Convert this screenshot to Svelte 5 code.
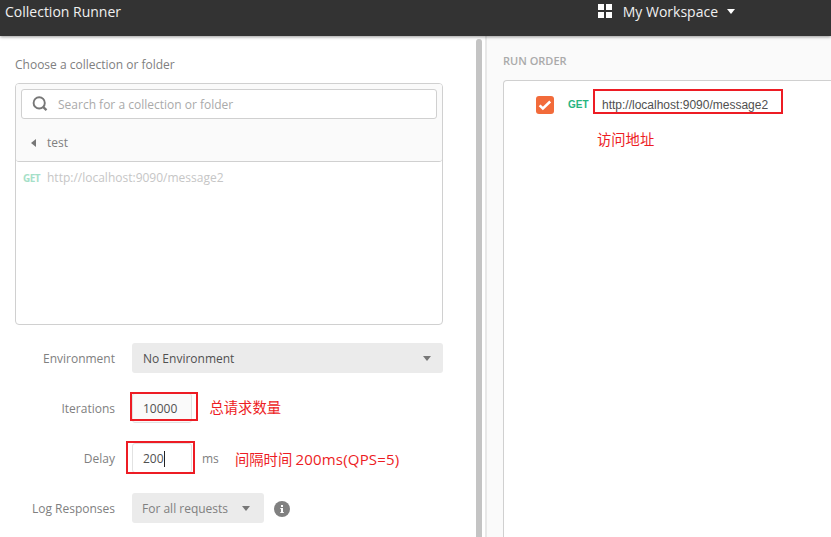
<script>
  let search = $state('');
  let iterations = $state('10000');
  let delay = $state('200');
</script>

<div class="app">
  <header>
    <h1>Collection Runner</h1>
    <div class="workspace">
      <svg width="14" height="14" viewBox="0 0 14 14" fill="#fff"><path d="M0 0h6v6H0zM8 0h6v6H8zM0 8h6v6H0zM8 8h6v6H8z" /></svg>
      <span class="wsname">My Workspace</span>
      <svg width="8" height="5" viewBox="0 0 8 5" fill="#fff"><path d="M0 0h8L4 5z" /></svg>
    </div>
  </header>

  <main>
    <section class="left">
      <div class="config">
        <div class="choose"><span>Choose a collection or folder</span></div>
        <div class="picker">
          <div class="picker-head">
            <div class="search">
              <svg width="16" height="16" viewBox="0 0 16 16" fill="none" stroke="#777" stroke-width="1.9"><circle cx="7.2" cy="6.9" r="5.6" /><path d="M11 10.8l3.5 3.3" stroke-width="2.3" /></svg>
              <input bind:value={search} placeholder="Search for a collection or folder" />
            </div>
            <div class="crumb">
              <svg width="5" height="8" viewBox="0 0 5 8" fill="#777"><path d="M5 0v8L0 4z" /></svg>
              <span>test</span>
            </div>
          </div>
          <div class="item"><b>GET</b><span>http://localhost:9090/message2</span></div>
        </div>

        <div class="row">
          <label for="env">Environment</label>
          <button id="env" class="select wide"><span>No Environment</span>
            <svg width="8" height="5" viewBox="0 0 8 5" fill="#777"><path d="M0 0h8L4 5z" /></svg></button>
        </div>
        <div class="row">
          <label for="iter">Iterations</label>
          <input id="iter" class="num soft" bind:value={iterations} />
        </div>
        <div class="row">
          <label for="delay">Delay</label>
          <div class="num"><span>{delay}</span><i class="caret"></i></div>
          <span class="unit">ms</span>
        </div>
        <div class="row">
          <label for="log">Log Responses</label>
          <button id="log" class="select"><span>For all requests</span>
            <svg width="8" height="5" viewBox="0 0 8 5" fill="#777"><path d="M0 0h8L4 5z" /></svg></button>
          <svg class="info" width="16" height="16" viewBox="0 0 16 16"><circle cx="8" cy="8" r="8" fill="#808080" /><path d="M7 4h2v2H7zM6.3 7H9v4h.8v1H6.3v-1H7V8h-.7z" fill="#fff" /></svg>
        </div>
      </div>
      <div class="scroll"></div>
    </section>

    <section class="right">
      <h2><span>RUN ORDER</span></h2>
      <div class="order">
        <div class="request">
          <span class="check"><svg width="18" height="18" viewBox="0 0 18 18" fill="none" stroke="#fff" stroke-width="2.5"><path d="M3.6 9.3l3.3 3.2 7.3-7" /></svg></span>
          <b>GET</b>
          <span>http://localhost:9090/message2</span>
        </div>
      </div>
    </section>
  </main>

  <div class="mark m-url"></div>
  <div class="mark m-iter"></div>
  <div class="mark m-delay"></div>
  <span class="note n-url">访问地址</span>
  <span class="note n-iter">总请求数量</span>
  <span class="note n-delay">间隔时间 <span class="latin">200ms(QPS=5)</span></span>
</div>

<style>
  :global(body) { margin: 0; overflow: hidden; }
  * { box-sizing: border-box; }
  .app {
    position: relative; width: 831px; height: 537px; overflow: hidden;
    display: flex; flex-direction: column; background: #fff;
    font: 12px/18px "Open Sans", "Noto Sans CJK SC", sans-serif; color: #808080;
  }
  svg { display: block; flex: none; }
  span, b, label { white-space: nowrap; }
  input, button { font: inherit; color: inherit; border: 0; outline: 0; padding: 0; margin: 0; }
  header {
    height: 36px; flex: none; background: #333; color: #f0f0f0; z-index: 1;
    display: flex; justify-content: space-between; padding: 2px 96px 0 5px;
    box-shadow: 0 1px 3px rgba(0, 0, 0, .4);
  }
  h1 { margin: 0; font-size: 14px; line-height: 20px; font-weight: 400; }
  .workspace { display: flex; align-items: center; height: 18px; font-size: 14px; line-height: 20px; }
  .wsname { margin: 1px 9px 0 11px; }
  main { flex: 1; min-height: 0; display: flex; }
  .left { width: 487px; flex: none; display: flex; border-right: 2px solid #e8e8e8; }
  .config { width: 476px; padding: 20px 33px 0 15px; }
  .scroll { width: 6px; margin-top: 3px; border-radius: 3px 3px 0 0; background: #c4c4c4; }
  .choose { height: 27px; }
  .picker { height: 242px; border: 1px solid #d0d0d0; border-radius: 4px; background: #fff; margin-bottom: 18px; }
  .picker-head {
    height: 78px; padding: 5px; background: #fafafa;
    border-bottom: 1px solid #d0d0d0; border-radius: 3px;
  }
  .search {
    height: 30px; border: 1px solid #d0d0d0; border-radius: 3px; background: #fff;
    display: flex; align-items: center; gap: 10px; padding-left: 10px;
  }
  .search input { flex: 1; height: 28px; padding-top: 1px; background: none; }
  .search input::placeholder { color: #aaa; opacity: 1; }
  .crumb { display: flex; align-items: center; gap: 11px; height: 48px; padding-left: 10px; }
  .item { display: flex; align-items: center; height: 32px; padding-left: 7px; color: #c6c6c6; }
  .item b { font-size: 10px; letter-spacing: -.6px; width: 24px; color: #a5e0c8; }
  .row { display: flex; align-items: center; height: 30px; margin-bottom: 20px; }
  label { width: 100px; margin-right: 17px; padding-top: 2px; text-align: right; }
  .select {
    width: 132px; height: 30px; padding: 0 14px 0 10px; border-radius: 3px; background: #ebebeb;
    display: flex; align-items: center; justify-content: space-between;
  }
  .select span { padding-top: 2px; }
  .wide { width: 311px; padding: 0 12px 0 11px; color: #505050; }
  .num {
    width: 60px; height: 30px; padding: 0 10px; border: 1px solid #e2e2e2; border-radius: 3px;
    color: #505050; display: flex; align-items: center; background: #fff;
  }
  .num span { padding-top: 2px; }
  .soft { background: #fafafa; }
  .caret { width: 1px; height: 16px; margin-top: 1px; background: #222; }
  .unit { margin-left: 10px; padding-top: 2px; }
  .info { margin: 2px 0 0 10px; }
  .right { flex: 1; min-width: 0; background: #fafafa; padding: 16px 0 0 16px; display: flex; flex-direction: column; }
  h2 { margin: 0; height: 28px; font-size: 11px; line-height: 18px; font-weight: 600; color: #aaa; }
  .order { flex: 1; width: 340px; background: #fff; border: 1px solid #d0d0d0; border-bottom: 0; border-radius: 4px 0 0 0; padding: 15px 0 0 32px; }
  .request { display: flex; align-items: center; height: 18px; font-family: "Liberation Sans", Arial, sans-serif; color: #505050; }
  .check { width: 18px; height: 18px; border-radius: 3px; background: #f26b3a; }
  .request b { width: 34px; margin-left: 14px; font-size: 10px; color: #26b47f; }
  .mark { position: absolute; border: 2px solid #ed1c24; }
  .m-url { left: 593px; top: 89px; width: 190px; height: 25px; }
  .m-iter { left: 130px; top: 392px; width: 68px; height: 29px; }
  .m-delay { left: 126px; top: 441px; width: 69px; height: 33px; }
  .note { position: absolute; color: #ed1c24; font: 14.3px/20px "Noto Sans CJK SC", sans-serif; }
  .n-url { left: 597px; top: 129px; }
  .n-iter { left: 209.5px; top: 397px; }
  .n-delay { left: 235px; top: 449px; }
  .latin { font-family: "Open Sans", sans-serif; font-size: 15px; letter-spacing: .2px; }
</style>
